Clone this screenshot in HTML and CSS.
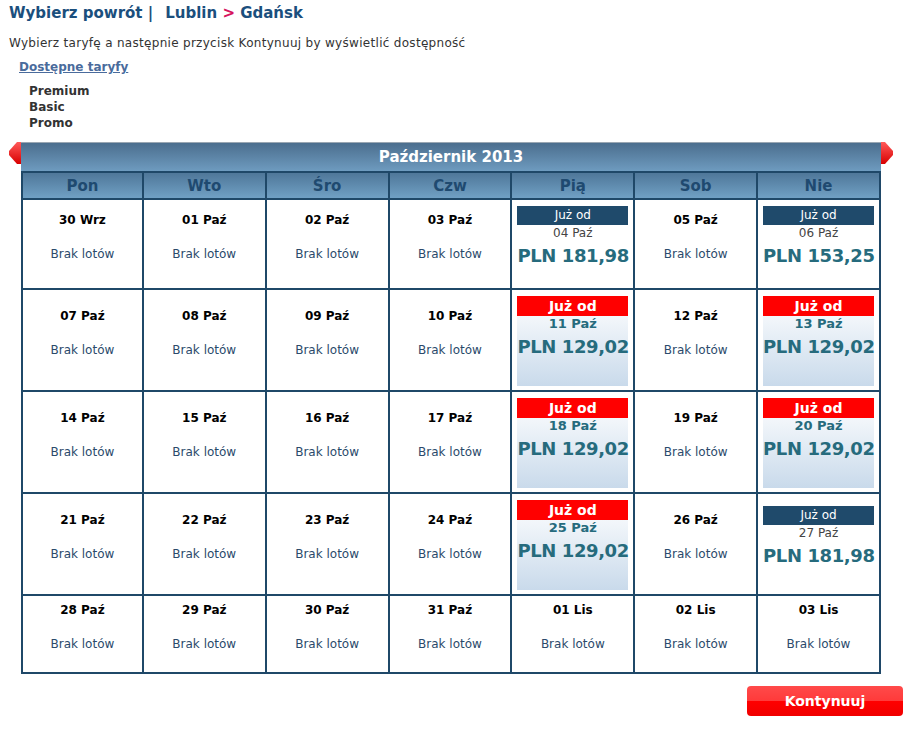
FILE: index.html
```html
<!DOCTYPE html>
<html lang="pl">
<head>
    <meta charset="UTF-8">
    <title>Wybierz powrót - Lublin &gt; Gdańsk</title>
    <link rel="stylesheet" href="styles.css">
</head>
<body>
    <div class="page">
        <h2 class="route-title">Wybierz powrót |<span class="route">Lublin <span class="arrow">&gt;</span> Gdańsk</span></h2>
        <p class="intro">Wybierz taryfę a następnie przycisk Kontynuuj by wyświetlić dostępność</p>
        <a href="#" class="fares-link">Dostępne taryfy</a>
        <ul class="fares">
            <li>Premium</li>
            <li>Basic</li>
            <li>Promo</li>
        </ul>

        <div class="calendar-wrap">
            <svg class="nav-arrow" width="13" height="22" viewBox="0 0 13 22">
                <defs>
                    <linearGradient id="redL" x1="0" y1="0" x2="0" y2="1">
                        <stop offset="0" stop-color="#ff5a5a"/>
                        <stop offset="1" stop-color="#d80000"/>
                    </linearGradient>
                </defs>
                <polygon points="13,0 9,0 1,9 1,13 9,22 13,22" fill="url(#redL)"/>
            </svg>

            <div class="calendar">
                <div class="month-title">Październik 2013</div>
                <table class="cal-table">
                    <thead>
                        <tr>
                            <th>Pon</th><th>Wto</th><th>Śro</th><th>Czw</th><th>Pią</th><th>Sob</th><th>Nie</th>
                        </tr>
                    </thead>
                    <tbody>
                        <tr>
                            <td><div class="day">30 Wrz</div><div class="none">Brak lotów</div></td>
                            <td><div class="day">01 Paź</div><div class="none">Brak lotów</div></td>
                            <td><div class="day">02 Paź</div><div class="none">Brak lotów</div></td>
                            <td><div class="day">03 Paź</div><div class="none">Brak lotów</div></td>
                            <td><div class="fare fare-std"><div class="fare-label">Już od</div><div class="fare-day">04 Paź</div><div class="fare-price">PLN 181,98</div></div></td>
                            <td><div class="day">05 Paź</div><div class="none">Brak lotów</div></td>
                            <td><div class="fare fare-std"><div class="fare-label">Już od</div><div class="fare-day">06 Paź</div><div class="fare-price">PLN 153,25</div></div></td>
                        </tr>
                        <tr>
                            <td><div class="day">07 Paź</div><div class="none">Brak lotów</div></td>
                            <td><div class="day">08 Paź</div><div class="none">Brak lotów</div></td>
                            <td><div class="day">09 Paź</div><div class="none">Brak lotów</div></td>
                            <td><div class="day">10 Paź</div><div class="none">Brak lotów</div></td>
                            <td><div class="fare fare-promo"><div class="fare-label">Już od</div><div class="fare-day">11 Paź</div><div class="fare-price">PLN 129,02</div></div></td>
                            <td><div class="day">12 Paź</div><div class="none">Brak lotów</div></td>
                            <td><div class="fare fare-promo"><div class="fare-label">Już od</div><div class="fare-day">13 Paź</div><div class="fare-price">PLN 129,02</div></div></td>
                        </tr>
                        <tr>
                            <td><div class="day">14 Paź</div><div class="none">Brak lotów</div></td>
                            <td><div class="day">15 Paź</div><div class="none">Brak lotów</div></td>
                            <td><div class="day">16 Paź</div><div class="none">Brak lotów</div></td>
                            <td><div class="day">17 Paź</div><div class="none">Brak lotów</div></td>
                            <td><div class="fare fare-promo"><div class="fare-label">Już od</div><div class="fare-day">18 Paź</div><div class="fare-price">PLN 129,02</div></div></td>
                            <td><div class="day">19 Paź</div><div class="none">Brak lotów</div></td>
                            <td><div class="fare fare-promo"><div class="fare-label">Już od</div><div class="fare-day">20 Paź</div><div class="fare-price">PLN 129,02</div></div></td>
                        </tr>
                        <tr>
                            <td><div class="day">21 Paź</div><div class="none">Brak lotów</div></td>
                            <td><div class="day">22 Paź</div><div class="none">Brak lotów</div></td>
                            <td><div class="day">23 Paź</div><div class="none">Brak lotów</div></td>
                            <td><div class="day">24 Paź</div><div class="none">Brak lotów</div></td>
                            <td><div class="fare fare-promo"><div class="fare-label">Już od</div><div class="fare-day">25 Paź</div><div class="fare-price">PLN 129,02</div></div></td>
                            <td><div class="day">26 Paź</div><div class="none">Brak lotów</div></td>
                            <td><div class="fare fare-std"><div class="fare-label">Już od</div><div class="fare-day">27 Paź</div><div class="fare-price">PLN 181,98</div></div></td>
                        </tr>
                        <tr>
                            <td><div class="day">28 Paź</div><div class="none">Brak lotów</div></td>
                            <td><div class="day">29 Paź</div><div class="none">Brak lotów</div></td>
                            <td><div class="day">30 Paź</div><div class="none">Brak lotów</div></td>
                            <td><div class="day">31 Paź</div><div class="none">Brak lotów</div></td>
                            <td><div class="day">01 Lis</div><div class="none">Brak lotów</div></td>
                            <td><div class="day">02 Lis</div><div class="none">Brak lotów</div></td>
                            <td><div class="day">03 Lis</div><div class="none">Brak lotów</div></td>
                        </tr>
                    </tbody>
                </table>
            </div>

            <svg class="nav-arrow" width="13" height="22" viewBox="0 0 13 22">
                <defs>
                    <linearGradient id="redR" x1="0" y1="0" x2="0" y2="1">
                        <stop offset="0" stop-color="#ff5a5a"/>
                        <stop offset="1" stop-color="#d80000"/>
                    </linearGradient>
                </defs>
                <polygon points="0,0 4,0 12,9 12,13 4,22 0,22" fill="url(#redR)"/>
            </svg>
        </div>

        <div class="actions">
            <button class="btn-continue">Kontynuuj</button>
        </div>
    </div>
</body>
</html>
```

FILE: styles.css
```css
body {
    margin: 0;
    font-family: 'DejaVu Sans', Verdana, sans-serif;
    font-size: 12px;
    color: #333;
    background: white;
}
.page {
    padding: 3px 7px 0 8px;
}
.route-title {
    margin: 0 0 0 1px;
    font-size: 15px;
    line-height: 20px;
    color: #1b4f7d;
}
.route {
    margin-left: 12px;
}
.route .arrow {
    color: #d6145e;
}
.intro {
    margin: 12px 0 0 1px;
    line-height: 16px;
    letter-spacing: 0.3px;
}
.fares-link {
    display: inline-block;
    margin: 8px 0 0 11px;
    line-height: 16px;
    font-weight: bold;
    color: #4a6b9c;
}
.fares {
    list-style: none;
    margin: 8px 0 0 21px;
    padding: 0;
    font-weight: bold;
    line-height: 16px;
}
.calendar-wrap {
    display: flex;
    align-items: flex-start;
    margin-top: 11px;
}
.nav-arrow {
    flex: none;
    display: block;
}
.calendar {
    width: 860px;
}
.month-title {
    height: 28px;
    line-height: 28px;
    border-top: 1px solid #9aa7b3;
    background: linear-gradient(#4b6e8e, #6e9bbf);
    color: white;
    font-size: 15px;
    font-weight: bold;
    text-align: center;
}
.cal-table {
    width: 860px;
    table-layout: fixed;
    border-spacing: 0;
}
.cal-table th {
    height: 25px;
    padding: 0;
    border-top: 2px solid #1f4868;
    border-bottom: 2px solid #1f4868;
    border-right: 2px solid #1f4868;
    background: linear-gradient(#4f7799, #70a0c4);
    color: #1f4a70;
    font-size: 15px;
    font-weight: bold;
}
.cal-table td {
    padding: 6px 5px 4px;
    border-right: 2px solid #1f4868;
    border-bottom: 2px solid #1f4868;
    text-align: center;
    vertical-align: middle;
}
.cal-table th:first-child,
.cal-table td:first-child {
    border-left: 2px solid #1f4868;
}
.day {
    line-height: 16px;
    font-weight: bold;
    color: #000;
}
.none {
    margin: 18px 0 16px;
    line-height: 16px;
    color: #2b4a6b;
}
.fare {
    color: #266b7d;
    white-space: nowrap;
}
.fare-std {
    height: 78px;
}
.fare-promo {
    height: 90px;
    background: linear-gradient(white, #c9daeb);
}
.fare-std .fare-label {
    height: 19px;
    line-height: 19px;
    background: #1f4a6b;
    color: white;
}
.fare-promo .fare-label {
    height: 20px;
    line-height: 20px;
    background: #ff0000;
    color: white;
    font-size: 14px;
    font-weight: bold;
}
.fare-day {
    margin-top: 1px;
    line-height: 14px;
}
.fare-std .fare-day {
    color: #444;
}
.fare-promo .fare-day {
    font-size: 13px;
    font-weight: bold;
}
.fare-price {
    margin-top: 3px;
    line-height: 26px;
    font-size: 18px;
    font-weight: bold;
    letter-spacing: -0.4px;
}
.actions {
    display: flex;
    justify-content: flex-end;
    margin-top: 12px;
}
.btn-continue {
    width: 156px;
    height: 30px;
    border: none;
    border-radius: 4px;
    background: linear-gradient(#ff4a4a 0%, #ff3a3a 50%, #ff0000 50%, #f00000 100%);
    color: white;
    font-family: 'DejaVu Sans', Verdana, sans-serif;
    font-size: 14px;
    font-weight: bold;
    cursor: pointer;
}
```
